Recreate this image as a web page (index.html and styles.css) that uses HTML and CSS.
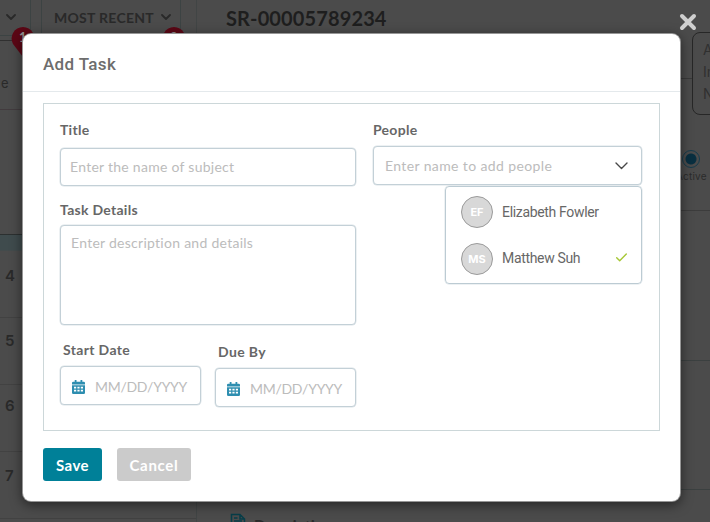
FILE: index.html
```
<!DOCTYPE html>
<html lang="en">
<head>
<meta charset="utf-8">
<title>Add Task</title>
<link rel="stylesheet" href="styles.css">
</head>
<body>
<div class="page">
  <aside class="side">
    <div class="filters">
      <div class="filter filter-first"><svg class="chev" viewBox="0 0 10 7"><path d="M1 1l4 4 4-4"/></svg></div>
      <div class="filter filter-sort"><span>MOST RECENT</span><svg class="chev" viewBox="0 0 10 7"><path d="M1 1l4 4 4-4"/></svg></div>
    </div>
    <div class="tab">e</div>
    <div class="band"></div>
    <div class="slot">4</div>
    <div class="slot slot-five">5</div>
    <div class="slot slot-six">6</div>
    <div class="slot slot-seven">7</div>
    <svg class="pin pin-one" viewBox="0 0 24 30"><path d="M12 0a11.500 11.500 0 0 1 10 17l-10 13L2 17A11.500 11.500 0 0 1 12 0z"/><text x="8" y="15">1</text></svg>
    <svg class="pin pin-two" viewBox="0 0 24 30"><path d="M12 0a11.500 11.500 0 0 1 10 17l-10 13L2 17A11.500 11.500 0 0 1 12 0z"/><text x="8" y="15">2</text></svg>
  </aside>
  <main class="main">
    <div class="record"><h1>SR-00005789234</h1></div>
    <div class="progress"></div>
    <div class="panel"></div>
    <div class="panel panel-short"></div>
    <div class="description"><svg viewBox="0 0 16 18"><path d="M1.500 1.500h8.500l4.500 4.500v10.500h-13zM10 1.500v4.500h4.500M4 5h3.500M4 8h8M4 11h8"/></svg><span>Description</span></div>
    <div class="note">A<br>In<br>N</div>
    <div class="step"></div>
    <div class="step-label">Active</div>
  </main>
</div>
<div class="overlay">
  <section class="modal">
    <header class="modal-head"><h2>Add Task</h2></header>
    <form class="form">
      <div class="left">
        <label class="label label-title">Title</label>
        <div class="field title-field"><span class="ph ph-title">Enter the name of subject</span></div>
        <label class="label label-details">Task Details</label>
        <div class="field details-field"><span class="ph ph-details">Enter description and details</span></div>
        <div class="dates">
          <div class="date">
            <label class="label label-start">Start Date</label>
            <div class="field date-field"><svg class="cal" viewBox="0 0 13 14"><path fill-rule="evenodd" d="M2.700 0h1.800v1.800h4V0h1.800v1.800h1.500q1.200 0 1.200 1.200v1.500H0V3q0-1.200 1.200-1.200h1.500zM0 5.300h13v7.500q0 1.200-1.200 1.200H1.200Q0 14 0 12.800zM2 6.800v1.600h2.200V6.800zm3.400 0v1.600h2.200V6.800zm3.400 0v1.600H11V6.800zM2 9.800v1.800h2.200V9.800zm3.400 0v1.800h2.200V9.800zm3.400 0v1.800H11V9.800z"/></svg><span class="ph ph-date">MM/DD/YYYY</span></div>
          </div>
          <div class="date date-due">
            <label class="label label-due">Due By</label>
            <div class="field date-field"><svg class="cal" viewBox="0 0 13 14"><path fill-rule="evenodd" d="M2.700 0h1.800v1.800h4V0h1.800v1.800h1.500q1.200 0 1.200 1.200v1.500H0V3q0-1.200 1.200-1.200h1.500zM0 5.300h13v7.500q0 1.200-1.200 1.200H1.200Q0 14 0 12.800zM2 6.800v1.600h2.200V6.800zm3.400 0v1.600h2.200V6.800zm3.400 0v1.600H11V6.800zM2 9.800v1.800h2.200V9.800zm3.400 0v1.800h2.200V9.800zm3.400 0v1.800H11V9.800z"/></svg><span class="ph ph-date">MM/DD/YYYY</span></div>
          </div>
        </div>
      </div>
      <div class="right">
        <label class="label label-people">People</label>
        <div class="field people-field"><span class="ph ph-people">Enter name to add people</span><svg class="drop" viewBox="0 0 13 8"><path d="M1 1l5.500 5.500L12 1"/></svg></div>
        <div class="menu">
          <div class="person"><span class="avatar">EF</span><span class="name name-ef">Elizabeth Fowler</span></div>
          <div class="person"><span class="avatar">MS</span><span class="name name-ms">Matthew Suh</span><svg class="check" viewBox="0 0 11 9"><path d="M.7 4.800l3 3L10.300 1"/></svg></div>
        </div>
      </div>
    </form>
    <footer class="actions"><div class="btn save">Save</div><div class="btn cancel">Cancel</div></footer>
  </section>
  <svg class="close" viewBox="0 0 18 18"><path d="M3 3l12 12M15 3L3 15"/></svg>
</div>
</body>
</html>
```
FILE: styles.css
```
* { box-sizing: border-box; }
body { margin: 0; width: 710px; height: 522px; overflow: hidden; background: #4b4b4b; font-family: Lato, "Open Sans", sans-serif; color: #676767; }
svg { display: block; flex: none; }

.page { display: flex; width: 710px; height: 522px; overflow: hidden; color: #292929; }
.side { position: relative; width: 197px; flex: none; border-right: 1px solid #414545; }
.filters { display: flex; gap: 10px; height: 41px; border-bottom: 1px solid #303030; }
.filter { display: flex; align-items: center; height: 36px; border: 1px solid #3c4343; border-top: 0; }
.filter-first { width: 31px; padding-left: 6px; border-left: 0; }
.filter-sort { width: 140px; padding-left: 12px; gap: 6px; font-size: 14px; font-weight: 700; letter-spacing: .28px; }
.filter-sort span { width: 101px; white-space: nowrap; }
.chev { width: 10px; height: 7px; }
.chev path, .drop path, .check path { fill: none; stroke: #292929; stroke-width: 1.8; stroke-linecap: round; stroke-linejoin: round; }
.tab { height: 69px; padding: 32px 0 0 1px; font: 13px/20px Inter, sans-serif; border-bottom: 1px solid #423b3e; }
.band { height: 141px; border-bottom: 1px solid #434b4c; background: linear-gradient(#4b4b4b 124px, #2c3030 124px, #2c3030 125px, #3f4b4d 125px); }
.slot { height: 67px; padding: 14px 0 0 5px; border-bottom: 1px solid #424242; font: 600 15px/22px Inter, sans-serif; }
.slot-five { padding-top: 12px; }
.slot-six { padding-top: 10px; }
.slot-seven { padding-top: 13px; }
.pin { position: absolute; top: 27px; width: 24px; height: 30px; fill: #5b0715; }
.pin text { fill: #929292; font: 700 13px Lato, sans-serif; }
.pin-one { left: 11px; }
.pin-two { left: 162px; }
.main { position: relative; flex: 1; }
.record { height: 79px; padding: 6px 0 0 29px; border-bottom: 1px solid #393939; }
.record h1 { margin: 0; font-size: 20px; line-height: 25px; font-weight: 700; letter-spacing: .12px; color: #1e1e1e; white-space: nowrap; }
.progress { height: 132px; border-bottom: 1px solid #3c3c3c; }
.panel { height: 150px; border-bottom: 1px solid #3b4040; }
.panel-short { height: 129px; }
.description { display: flex; gap: 8px; margin-top: 23px; padding-left: 33px; font-size: 15px; font-weight: 700; line-height: 24px; }
.description svg { width: 16px; height: 18px; fill: none; stroke: #073e49; stroke-width: 1.500; }
.note { position: absolute; left: 495px; top: 32px; width: 40px; height: 83px; padding: 6px 0 0 10px; background: #4b4b4b; border: 1px solid #272727; border-radius: 8px; font: 14px/22px Inter, sans-serif; color: #303030; }
.step { position: absolute; left: 485px; top: 150px; width: 18px; height: 18px; border: 1px solid #173c4b; border-radius: 50%; background: radial-gradient(circle, #092f40 5px, #4b4b4b 6px); }
.step-label { position: absolute; left: 479px; top: 170px; font: 10px/13px Inter, sans-serif; letter-spacing: .2px; color: #2c2c2c; }

.overlay { position: absolute; inset: 0; padding: 34px 0 0 23px; }
.modal { width: 657px; height: 467px; background: #fff; border-radius: 8px; box-shadow: 0 0 0 1px #969696, 0 3px 12px 1px rgba(0,0,0,.5); }
.modal-head { height: 58px; padding: 18px 20px 0; border-bottom: 1px solid #e4e9ec; }
.modal-head h2 { margin: 0; font: 500 17px/24px Roboto, sans-serif; letter-spacing: .35px; color: #6d6d6d; }
.form { display: grid; grid-template-columns: 296px 269px; column-gap: 17px; width: 617px; height: 328px; margin: 11px 20px 0; padding: 17px 0 0 16px; border: 1px solid #ccd7d9; }
.label { display: block; height: 20px; font-size: 14px; font-weight: 700; line-height: 20px; letter-spacing: .28px; white-space: nowrap; }
.label-title, .label-people { line-height: 18px; }
.label-details { margin-top: 14px; }
.label-start, .label-due { padding-left: 3px; letter-spacing: .35px; }
.field { border: 1px solid #c3d0d7; border-radius: 4px; background: #fff; box-shadow: 0 0 0 .5px #dce4e8; }
.title-field { display: flex; height: 38px; margin-top: 7px; padding-left: 9px; align-items: center; }
.ph { font-size: 14px; line-height: 20px; color: #bcbcbc; white-space: nowrap; letter-spacing: .27px; }
.ph-people { letter-spacing: .38px; }
.ph-date { letter-spacing: -.28px; }
.details-field { height: 100px; margin-top: 5px; padding: 7px 0 0 10px; display: flex; }
.dates { display: flex; gap: 14px; padding-top: 15px; }
.date { width: 141px; }
.date-due { padding-top: 2px; }
.date-field { display: flex; align-items: center; height: 39px; margin-top: 6px; padding: 2px 0 0 11px; gap: 10px; }
.cal { width: 13px; height: 14px; fill: #2e8eb0; }
.people-field { display: flex; align-items: center; justify-content: space-between; height: 39px; margin-top: 5px; padding: 0 13px 0 11px; }
.drop { width: 13px; height: 8px; }
.drop path { stroke: #484848; stroke-width: 1.400; }
.menu { width: 197px; height: 98px; margin: 1px 0 0 72px; padding: 9px 0 0 15px; border: 1px solid #bccbd3; border-radius: 4px; box-shadow: 0 0 0 .5px #dce4e8; display: flex; flex-direction: column; gap: 15px; }
.person { display: flex; align-items: center; height: 32px; }
.avatar { width: 32px; height: 32px; border: 1px solid #9b9b9b; border-radius: 50%; background: #d8d8d8; color: #fff; font: 700 11px/30px Inter, sans-serif; text-align: center; }
.name { width: 114px; margin-left: 9px; font: 400 14px/18px Roboto, sans-serif; letter-spacing: -.33px; white-space: nowrap; }
.name-ms { margin-top: -3px; }
.check { width: 11px; height: 9px; margin-top: -3px; }
.check path { stroke: #a6c735; stroke-width: 1.400; }
.actions { display: flex; gap: 15px; padding: 17px 20px 0; }
.btn { height: 33px; border-radius: 3px; color: #fff; font-size: 15px; font-weight: 700; line-height: 34px; text-align: center; }
.save { width: 59px; background: #008098; letter-spacing: .4px; }
.cancel { width: 74px; background: #cbcbcb; letter-spacing: .7px; }
.close { position: absolute; left: 679px; top: 13px; width: 18px; height: 18px; }
.close path { stroke: #cfcfcf; stroke-width: 4; stroke-linecap: round; }
```
